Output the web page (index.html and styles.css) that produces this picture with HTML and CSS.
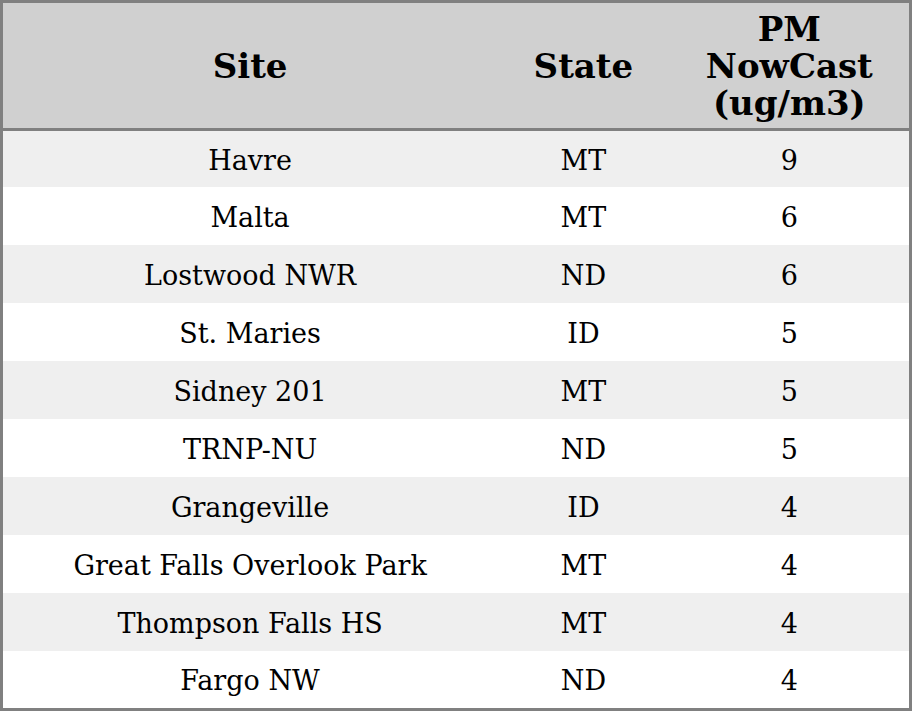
FILE: index.html
```html
<!DOCTYPE html>
<html>
<head>
<meta charset="utf-8">
<link rel="stylesheet" href="styles.css">
</head>
<body>
<table class="aq">
  <colgroup>
    <col class="c-site">
    <col class="c-state">
    <col class="c-pm">
  </colgroup>
  <thead>
    <tr><th>Site</th><th>State</th><th>PM<br>NowCast<br>(ug/m3)</th></tr>
  </thead>
  <tbody>
    <tr><td>Havre</td><td>MT</td><td>9</td></tr>
    <tr><td>Malta</td><td>MT</td><td>6</td></tr>
    <tr><td>Lostwood NWR</td><td>ND</td><td>6</td></tr>
    <tr><td>St. Maries</td><td>ID</td><td>5</td></tr>
    <tr><td>Sidney 201</td><td>MT</td><td>5</td></tr>
    <tr><td>TRNP-NU</td><td>ND</td><td>5</td></tr>
    <tr><td>Grangeville</td><td>ID</td><td>4</td></tr>
    <tr><td>Great Falls Overlook Park</td><td>MT</td><td>4</td></tr>
    <tr><td>Thompson Falls HS</td><td>MT</td><td>4</td></tr>
    <tr><td>Fargo NW</td><td>ND</td><td>4</td></tr>
  </tbody>
</table>
</body>
</html>
```
FILE: styles.css
```css
html, body {
  margin: 0;
  padding: 0;
  background: #ffffff;
}
.aq {
  width: 912px;
  border-collapse: collapse;
  border: 3px solid #808080;
  font-family: "DejaVu Serif", serif;
  color: #000;
  table-layout: fixed;
}
.c-site { width: 494px; }
.c-state { width: 172px; }
.c-pm { width: 240px; }
.aq th {
  background: #d0d0d0;
  font-weight: bold;
  font-size: 34px;
  line-height: 37px;
  height: 123px;
  padding: 2px 0 0 0;
  text-align: center;
  vertical-align: middle;
  border-bottom: 3px solid #808080;
}
.aq td {
  font-size: 27px;
  height: 56px;
  padding: 2px 0 0 0;
  text-align: center;
  vertical-align: middle;
}
.aq tbody tr:nth-child(odd) td { background: #efefef; }
.aq tbody tr:first-child td { height: 54px; }
.aq tbody tr:last-child td { height: 55px; }
```
